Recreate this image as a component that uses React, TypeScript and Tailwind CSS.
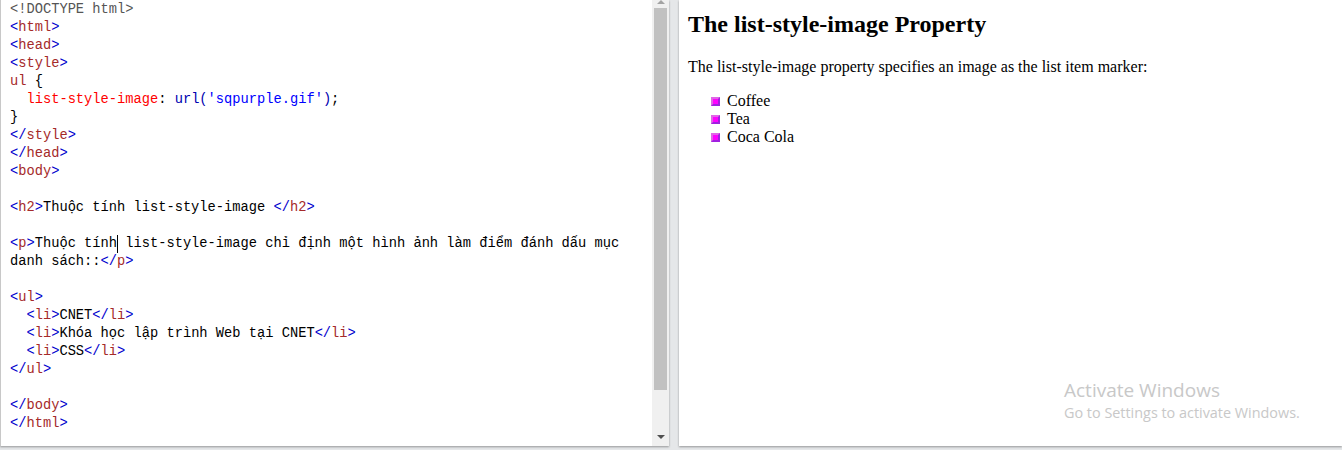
import React from "react";

const B = ({ children }: { children: React.ReactNode }) => <span className="text-[#0000cd]">{children}</span>;
const N = ({ children }: { children: React.ReactNode }) => <span className="text-[#a52a2a]">{children}</span>;
const Open = ({ t }: { t: string }) => (<><B>&lt;</B><N>{t}</N><B>&gt;</B></>);
const Close = ({ t }: { t: string }) => (<><B>&lt;/</B><N>{t}</N><B>&gt;</B></>);
const L = ({ children }: { children?: React.ReactNode }) => <div className="h-[18px] whitespace-pre">{children ?? " "}</div>;

function Marker() {
  return (
    <span className="box-border mr-[7px] h-[9px] w-[9px] shrink-0 border-2 border-t-[#e066e6] border-l-[#e066e6] border-b-[#a020e0] border-r-[#a020e0] bg-[#ff00ff]" />
  );
}

export default function App() {
  return (
    <div className="relative flex h-[450px] w-[1342px] overflow-hidden bg-[#e5e7e9] font-['Liberation_Serif',serif] text-black">
      <div className="flex h-[446px] w-[669px] shrink-0 border-l border-[#c8c8c8] bg-white shadow-[0_1px_2px_rgba(0,0,0,0.35)]">
        <div className="flex-1 overflow-hidden pl-[9px] pt-px font-['Liberation_Mono',monospace] text-[13.73px] leading-[18px] text-black">
          <L><span className="text-[#555]">&lt;!DOCTYPE html&gt;</span></L>
          <L><Open t="html" /></L>
          <L><Open t="head" /></L>
          <L><Open t="style" /></L>
          <L><N>ul</N> {"{"}</L>
          <L>  <span className="text-[#ff0000]">list-style-image</span>: <span className="text-[#0000b0]">url(</span><span className="text-[#0000ff]">'sqpurple.gif'</span><span className="text-[#0000b0]">)</span>;</L>
          <L>{"}"}</L>
          <L><Close t="style" /></L>
          <L><Close t="head" /></L>
          <L><Open t="body" /></L>
          <L />
          <L><Open t="h2" />Thuộc tính list-style-image <Close t="h2" /></L>
          <L />
          <L><Open t="p" />Thuộc tính<span className="inline-block h-[18px] w-px -mr-px bg-black align-top" /> list-style-image chỉ định một hình ảnh làm điểm đánh dấu mục</L>
          <L>danh sách::<Close t="p" /></L>
          <L />
          <L><Open t="ul" /></L>
          <L>  <Open t="li" />CNET<Close t="li" /></L>
          <L>  <Open t="li" />Khóa học lập trình Web tại CNET<Close t="li" /></L>
          <L>  <Open t="li" />CSS<Close t="li" /></L>
          <L><Close t="ul" /></L>
          <L />
          <L><Close t="body" /></L>
          <L><Close t="html" /></L>
        </div>
        <div className="flex w-[17px] shrink-0 flex-col items-center bg-[#f0f0f0]">
          <div className="flex h-[8px] items-start justify-center">
            <div className="h-0 w-0 border-x-[4px] border-b-[4px] border-x-transparent border-b-[#a3a3a3]" />
          </div>
          <div className="h-[382px] w-[13px] bg-[#c1c1c1]" />
          <div className="flex flex-1 items-end justify-center pb-[7px]">
            <div className="h-0 w-0 border-x-[4px] border-t-[4px] border-x-transparent border-t-[#505050]" />
          </div>
        </div>
      </div>
      <div className="ml-[10px] h-[446px] flex-1 bg-white pl-[9px] shadow-[0_1px_2px_rgba(0,0,0,0.35)]">
        <h2 className="mt-[11px] text-[24px] font-bold leading-[27px]">The list-style-image Property</h2>
        <p className="mt-[20px] text-[16px] leading-[18px]">The list-style-image property specifies an image as the list item marker:</p>
        <ul className="mt-[16px] pl-[23px] text-[16px] leading-[18px]">
          <li className="flex h-[18px] items-center"><Marker /><span>Coffee</span></li>
          <li className="flex h-[18px] items-center"><Marker /><span>Tea</span></li>
          <li className="flex h-[18px] items-center"><Marker /><span>Coca Cola</span></li>
        </ul>
      </div>
      <div className="absolute left-[1064px] top-[378px] font-['Open_Sans',sans-serif] text-[#c8c8c8]">
        <div className="text-[19px] leading-[24px]">Activate Windows</div>
        <div className="text-[14.4px] leading-[22px]">Go to Settings to activate Windows.</div>
      </div>
    </div>
  );
}
